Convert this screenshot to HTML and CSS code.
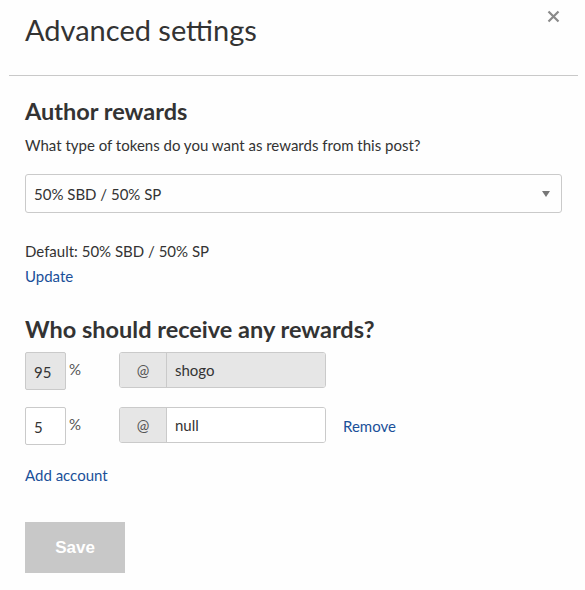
FILE: index.html
```html
<!DOCTYPE html>
<html>
<head>
<meta charset="utf-8">
<link rel="stylesheet" href="styles.css">
</head>
<body>
<div class="modal">
  <button class="close" aria-label="Close">
    <svg width="13" height="13" viewBox="0 0 13 13"><path d="M1.5 1.5 L11.5 11.5 M11.5 1.5 L1.5 11.5" stroke="#8a8a8a" stroke-width="2.2" fill="none"/></svg>
  </button>
  <div class="head">
    <h1 class="title">Advanced settings</h1>
  </div>
  <div class="body">
    <h2 class="section">Author rewards</h2>
    <p class="hint">What type of tokens do you want as rewards from this post?</p>
    <div class="select">
      <span>50% SBD / 50% SP</span>
      <span class="arrow"></span>
    </div>
    <p class="default">Default: 50% SBD / 50% SP</p>
    <a class="link update">Update</a>

    <h2 class="section who">Who should receive any rewards?</h2>
    <div class="row">
      <div class="pct disabled">95</div>
      <span class="pctsign">%</span>
      <div class="group">
        <div class="addon">@</div>
        <div class="acct disabled">shogo</div>
      </div>
    </div>
    <div class="row">
      <div class="pct">5</div>
      <span class="pctsign">%</span>
      <div class="group">
        <div class="addon">@</div>
        <div class="acct">null</div>
      </div>
      <a class="link remove">Remove</a>
    </div>
    <a class="link add">Add account</a>
    <div class="actions">
      <button class="save">Save</button>
    </div>
  </div>
</div>
</body>
</html>
```
FILE: styles.css
```css
* { box-sizing: border-box; }
html, body { margin: 0; padding: 0; background: #fefefe; }
body {
  font-family: "Source Sans Pro", Lato, "Noto Sans", sans-serif;
  color: #333;
  font-size: 15px;
}
.modal {
  position: relative;
  width: 585px;
  height: 590px;
  padding: 0 7px 0 9px;
}
.close {
  position: absolute;
  top: 10px;
  right: 25px;
  border: 0;
  background: none;
  padding: 0;
  width: 13px;
  height: 13px;
  line-height: 0;
}
.head {
  height: 76px;
  border-bottom: 1px solid #c9c9c9;
  padding: 11px 0 0 16px;
}
.title {
  margin: 0;
  font-weight: 400;
  font-size: 29px;
  line-height: 38px;
  color: #333;
}
.body {
  padding: 0 16px;
}
.section {
  margin: 0;
  font-weight: 700;
  font-size: 23.5px;
  line-height: 28px;
  color: #333;
}
.section:first-child { margin-top: 21px; }
.hint {
  margin: 9px 0 0;
  line-height: 22px;
}
.select {
  margin-top: 18px;
  height: 39px;
  border: 1px solid #cacaca;
  border-radius: 3px;
  display: flex;
  align-items: center;
  justify-content: space-between;
  padding: 0 11px 0 8px;
}
.arrow {
  width: 0; height: 0;
  border-left: 4px solid transparent;
  border-right: 4px solid transparent;
  border-top: 6px solid #777;
  margin-top: 1px;
}
.default {
  margin: 27px 0 0;
  line-height: 22px;
}
.link {
  color: #1a5099;
  display: block;
  line-height: 22px;
  text-decoration: none;
  cursor: pointer;
}
.update { margin-top: 3px; }
.who { margin-top: 28px; }
.row {
  display: flex;
  align-items: center;
  margin-top: 9px;
  height: 38px;
}
.row + .row { margin-top: 17px; }
.pct {
  width: 41px;
  height: 38px;
  border: 1px solid #cacaca;
  border-radius: 2px;
  padding: 8px 0 0 8px;
  line-height: 22px;
  background: #fff;
}
.pct.disabled { background: #e6e6e6; }
.pctsign {
  width: 53px;
  padding-left: 3px;
  align-self: flex-start;
  margin-top: 8px;
  line-height: 18px;
  color: #555;
}
.group {
  display: flex;
  width: 207px;
  height: 36px;
  align-self: flex-start;
  border: 1px solid #cacaca;
  border-radius: 3px;
  overflow: hidden;
}
.addon {
  width: 47px;
  background: #e6e6e6;
  border-right: 1px solid #cacaca;
  display: flex;
  align-items: center;
  justify-content: center;
  color: #555;
}
.acct {
  flex: 1;
  background: #fff;
  padding-left: 8px;
  display: flex;
  align-items: center;
}
.acct.disabled { background: #e6e6e6; }
.remove { margin-left: 17px; margin-top: -1px; }
.add { margin-top: 19px; }
.actions { margin-top: 36px; }
.save {
  width: 100px;
  height: 51px;
  border: 0;
  background: #c8c8c8;
  color: #fff;
  font-family: "Liberation Sans", Arial, sans-serif;
  font-weight: 700;
  font-size: 17px;
  padding: 0;
}
```
